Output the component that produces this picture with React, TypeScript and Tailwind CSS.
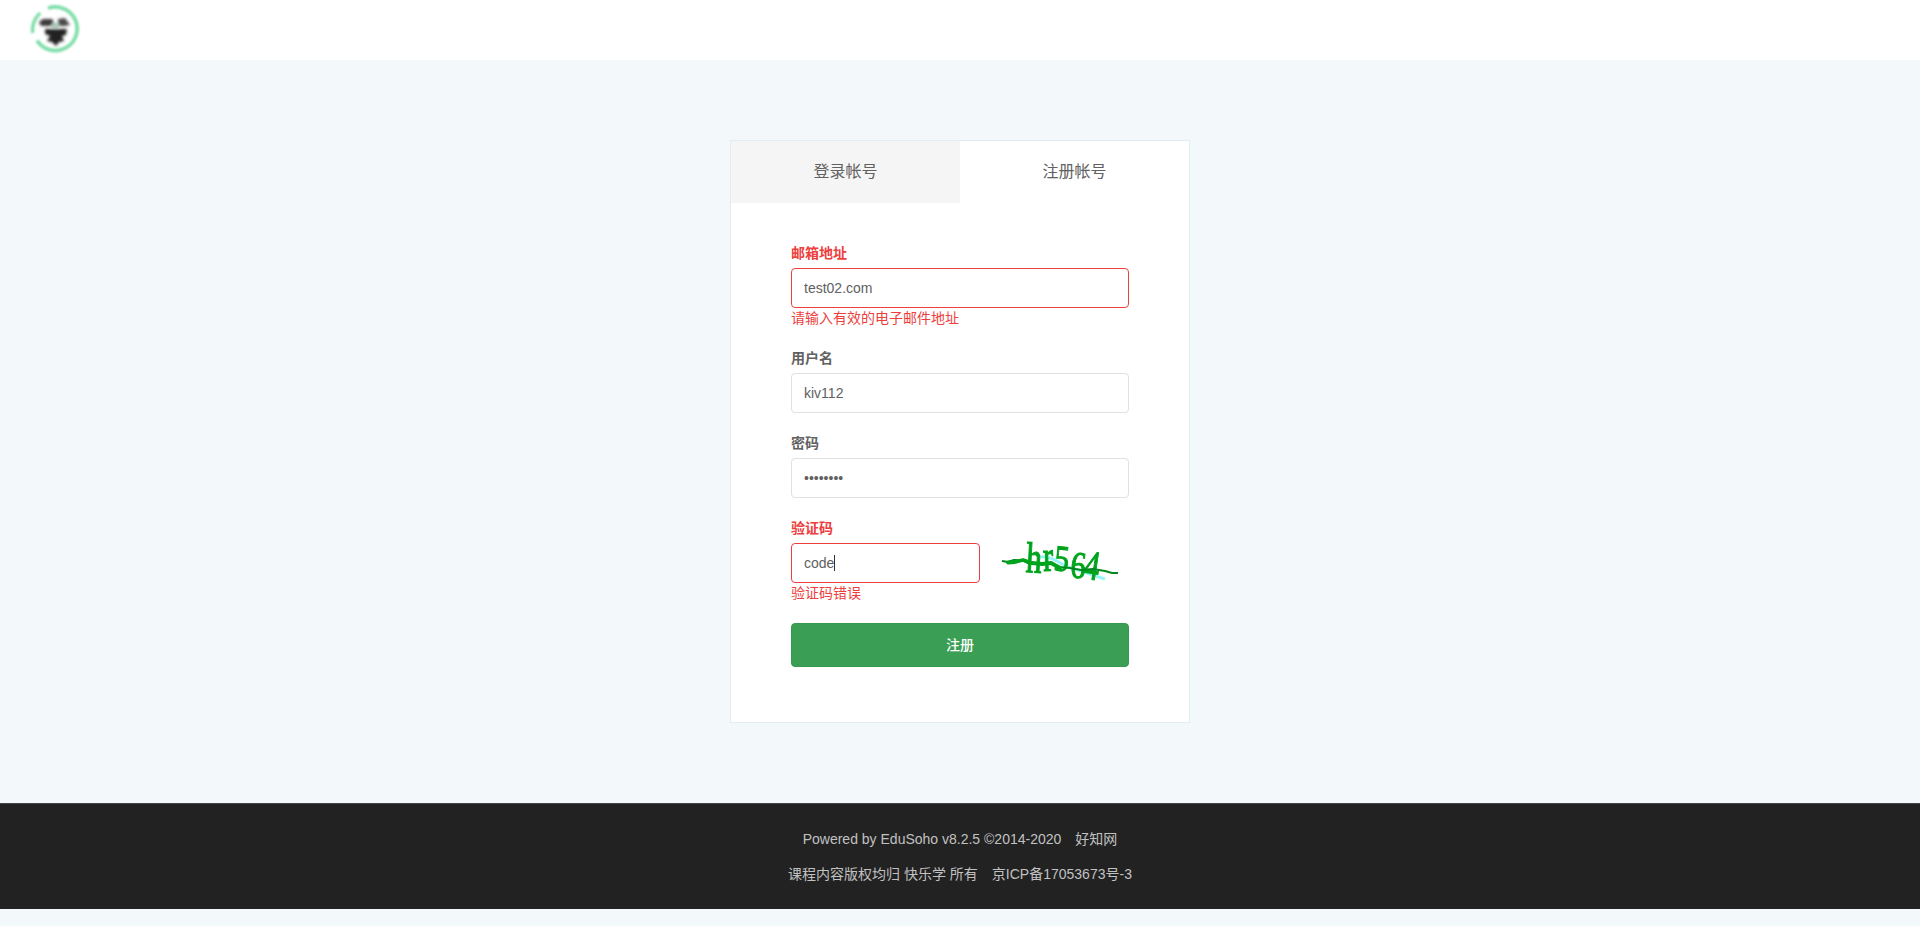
import type { ReactNode } from 'react';

function Logo() {
  return (
    <svg className="h-[52px] w-[52px] overflow-visible" viewBox="0 0 52 52" fill="none" aria-label="logo">
      <defs>
        <filter id="soft" x="-20%" y="-20%" width="140%" height="140%">
          <feGaussianBlur stdDeviation="1.8" />
        </filter>
        <filter id="ring" x="-20%" y="-20%" width="140%" height="140%">
          <feGaussianBlur stdDeviation="0.8" />
        </filter>
      </defs>
      <g filter="url(#ring)" stroke="#7fdea9" strokeWidth="3.8">
        <path d="M18 6.2A21.8 21.8 0 1 1 7 38.5" />
        <path d="M2.6 31C1.8 23 4.5 16 10.2 11" strokeWidth="3.4" />
      </g>
      <g filter="url(#soft)">
        <path d="M9 20L13 17H22L24 20L21 24H11Z" fill="#3a3a3a" />
        <path d="M28 17L35 16L40 23L35 24H28Z" fill="#4a4a4a" />
        <path d="M15 27H37L36 33L32 34L34 39L29 40L26 44L22 40L17 39L20 34L15 32Z" fill="#222" />
        <path d="M22 21H29V26H21Z" fill="#a8c4b4" />
      </g>
    </svg>
  );
}

function Captcha() {
  return (
    <svg className="h-10 w-[120px] overflow-visible" viewBox="0 0 120 40" role="img">
      <defs>
        <filter id="ink" x="-5%" y="-10%" width="110%" height="120%">
          <feGaussianBlur stdDeviation="0.4" />
        </filter>
      </defs>
      <g filter="url(#ink)">
        <path d="M39 14C49 13 56 17 62 21S76 26 84 29S98 34 105 36" stroke="#7df3f5" strokeWidth="3" fill="none" opacity=".8" />
        <g fill="#06a41d" stroke="#06a41d" strokeWidth=".9" fontFamily="'Liberation Serif', serif" fontSize="32">
          <text transform="translate(25.5 29) rotate(3) scale(.98 1.35)">h</text>
          <text transform="translate(43.5 28) rotate(-2) scale(.95 1.35)">r</text>
          <text transform="translate(53 27) rotate(6) scale(.95 1.15)">5</text>
          <text transform="translate(69.5 34) rotate(6) scale(.95 1.18)">6</text>
          <text transform="translate(82.5 35) rotate(9) scale(.95 1.3)">4</text>
        </g>
        <path d="M2 18L8 19L14 17L23 17.5L28 20L40 21L51 20L60 24L70 25L81 27L93 26L105 28L112 30L118 30" stroke="#06881f" strokeWidth="2" fill="none" strokeLinejoin="round" />
        <path d="M8 19.5L15 19L23 17L32 20L42 21L51 20L60 25" stroke="#06a41d" strokeWidth="3.8" fill="none" strokeLinecap="round" strokeLinejoin="round" />
      </g>
    </svg>
  );
}

type FieldProps = { label: string; error?: string; children: ReactNode };

function Field({ label, error, children }: FieldProps) {
  return (
    <div className="mb-5">
      <div className={`mb-[5px] h-5 text-sm leading-5 font-bold ${error ? 'text-[#ed3e3e]' : 'text-[#616161]'}`}>{label}</div>
      {children}
      {error && <div className="h-5 text-sm leading-5 text-[#ed3e3e]">{error}</div>}
    </div>
  );
}

function Box({ children, error = false }: { children: ReactNode; error?: boolean }) {
  return (
    <div
      className={`flex h-10 flex-1 items-center rounded-[4px] border bg-white px-3 text-sm text-[#616161] ${
        error ? 'border-[#ed3e3e]' : 'border-[#e1e1e1]'
      }`}
    >
      {children}
    </div>
  );
}

export default function App() {
  return (
    <div className="min-h-[926px] bg-[#f3f8fb] font-['Liberation_Sans','Noto_Sans_CJK_SC',sans-serif] text-[#616161]">
      <header className="flex h-[60px] items-start bg-white pt-[2px] pl-[30px]">
        <Logo />
      </header>

      <main className="flex justify-center py-20">
        <section className="h-[583px] w-[460px] border border-[#e4ecf3] bg-white">
          <nav className="grid h-[62px] grid-cols-2 text-center text-base leading-[61px]">
            <a className="bg-[#f5f5f5]">登录帐号</a>
            <a>注册帐号</a>
          </nav>
          <form className="px-[60px] pt-10">
            <Field label="邮箱地址" error="请输入有效的电子邮件地址">
              <Box error>test02.com</Box>
            </Field>
            <Field label="用户名">
              <Box>kiv112</Box>
            </Field>
            <Field label="密码">
              <Box>••••••••</Box>
            </Field>
            <Field label="验证码" error="验证码错误">
              <div className="flex justify-between pr-[9px]">
                <div className="flex w-[189px]">
                  <Box error>
                    code
                    <span className="h-4 w-px bg-[#333]" />
                  </Box>
                </div>
                <Captcha />
              </div>
            </Field>
            <button type="button" className="block h-11 w-full rounded-[4px] border border-[#349a4e] bg-[#3a9f54] text-sm font-medium text-white">
              注册
            </button>
          </form>
        </section>
      </main>

      <footer className="flex h-[106px] flex-col items-center gap-[15px] border-t border-[#444] bg-[#222] pt-[25px] text-sm leading-5 text-[#c1c1c1]">
        <div className="flex gap-[14px]">
          <span>Powered by EduSoho v8.2.5 ©2014-2020</span>
          <span>好知网</span>
        </div>
        <div className="flex gap-[14px]">
          <span>课程内容版权均归 快乐学 所有</span>
          <span>京ICP备17053673号-3</span>
        </div>
      </footer>
    </div>
  );
}
